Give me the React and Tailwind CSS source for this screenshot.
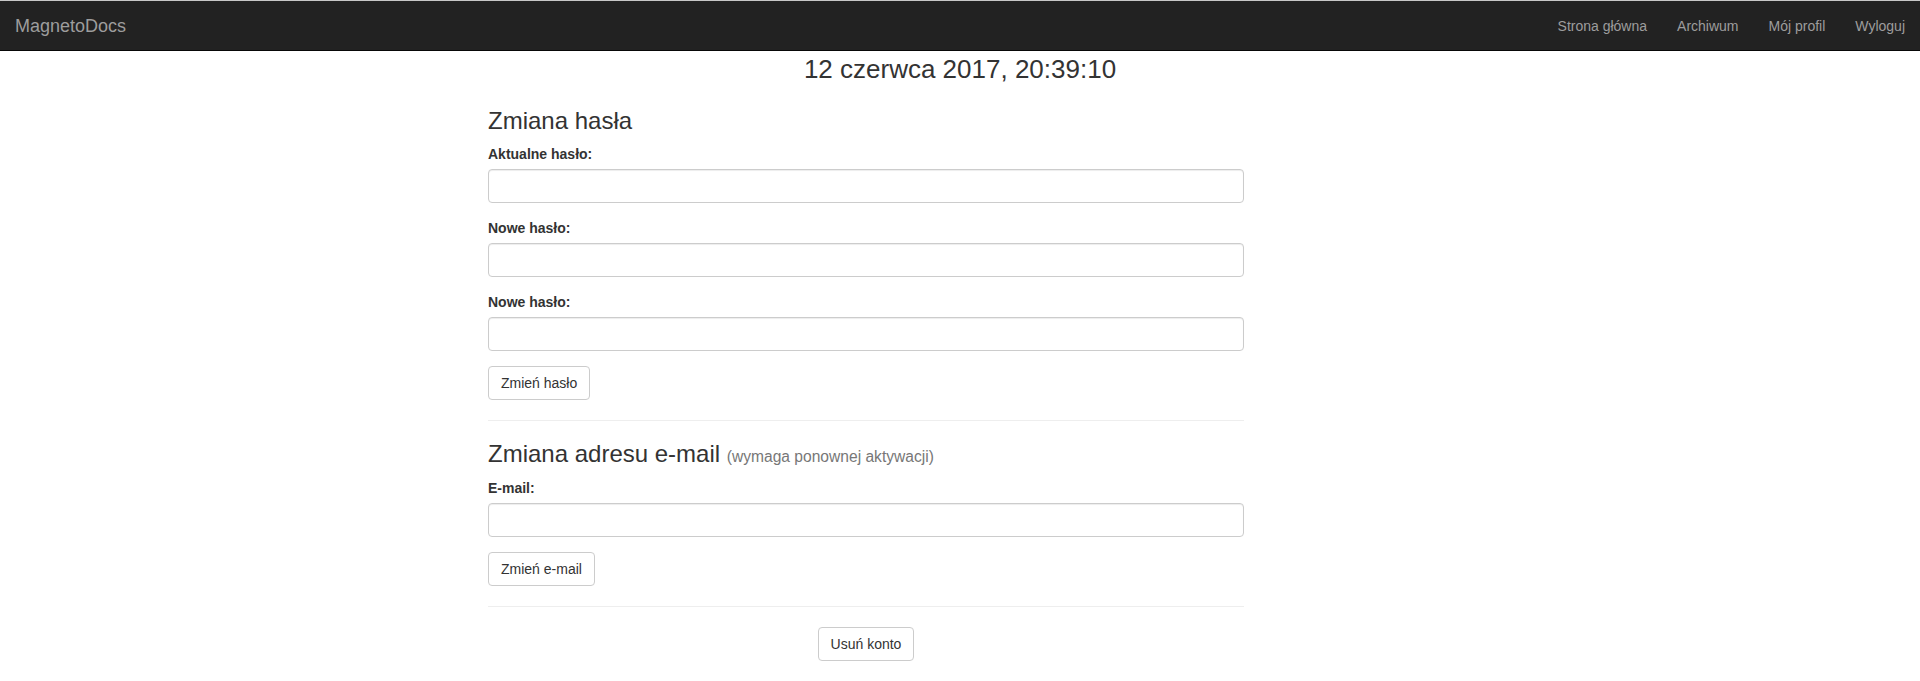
const navLinks = ["Strona główna", "Archiwum", "Mój profil", "Wyloguj"];

const Field = ({ label, type = "password" }) => (
  <div className="mb-[15px]">
    <label className="inline-block mb-[5px] text-[14px] leading-[20px] font-bold text-[#333]">
      {label}
    </label>
    <input
      type={type}
      className="block w-full h-[34px] px-3 py-1.5 text-[14px] text-[#555] bg-white border border-[#ccc] rounded-[4px] shadow-[inset_0_1px_1px_rgba(0,0,0,0.075)] outline-none"
    />
  </div>
);

const Button = ({ children }) => (
  <button
    type="button"
    className="inline-block align-middle h-[34px] px-3 text-[14px] leading-[20px] text-[#333] bg-white border border-[#ccc] rounded-[4px]"
  >
    {children}
  </button>
);

const Divider = () => <hr className="my-5 border-0 border-t border-[#eee]" />;

export default function App() {
  return (
    <div className="h-[681px] overflow-hidden bg-white text-[#333] text-[14px] leading-[20px] font-['Liberation_Sans',Arial,sans-serif]">
      <nav className="h-[51px] bg-[#222] border-t border-t-[#c8c8c8] border-b border-b-[#080808] flex items-center justify-between">
        <a className="pl-[15px] text-[18px] leading-[20px] text-[#9d9d9d]">
          MagnetoDocs
        </a>
        <ul className="flex">
          {navLinks.map((link) => (
            <li key={link}>
              <a className="block px-[15px] text-[14px] leading-[20px] text-[#9d9d9d]">
                {link}
              </a>
            </li>
          ))}
        </ul>
      </nav>

      <div className="w-[1170px] mx-auto">
        <div className="text-center text-[26px] leading-[37px]">
          12 czerwca 2017, 20:39:10
        </div>

        <div className="ml-[113px] w-[756px]">
          <h3 className="mt-5 mb-2.5 text-[24px] leading-[1.1] font-normal">
            Zmiana hasła
          </h3>
          <form>
            <Field label="Aktualne hasło:" />
            <Field label="Nowe hasło:" />
            <Field label="Nowe hasło:" />
            <div className="h-[34px]">
              <Button>Zmień hasło</Button>
            </div>
          </form>

          <Divider />

          <h3 className="mt-5 mb-2.5 text-[24px] leading-[1.1] font-normal">
            Zmiana adresu e-mail{" "}
            <small className="text-[65%] text-[#777]">
              (wymaga ponownej aktywacji)
            </small>
          </h3>
          <form>
            <Field label="E-mail:" type="email" />
            <div className="h-[34px]">
              <Button>Zmień e-mail</Button>
            </div>
          </form>

          <Divider />

          <div className="h-[34px] text-center">
            <Button>Usuń konto</Button>
          </div>
        </div>
      </div>
    </div>
  );
}
